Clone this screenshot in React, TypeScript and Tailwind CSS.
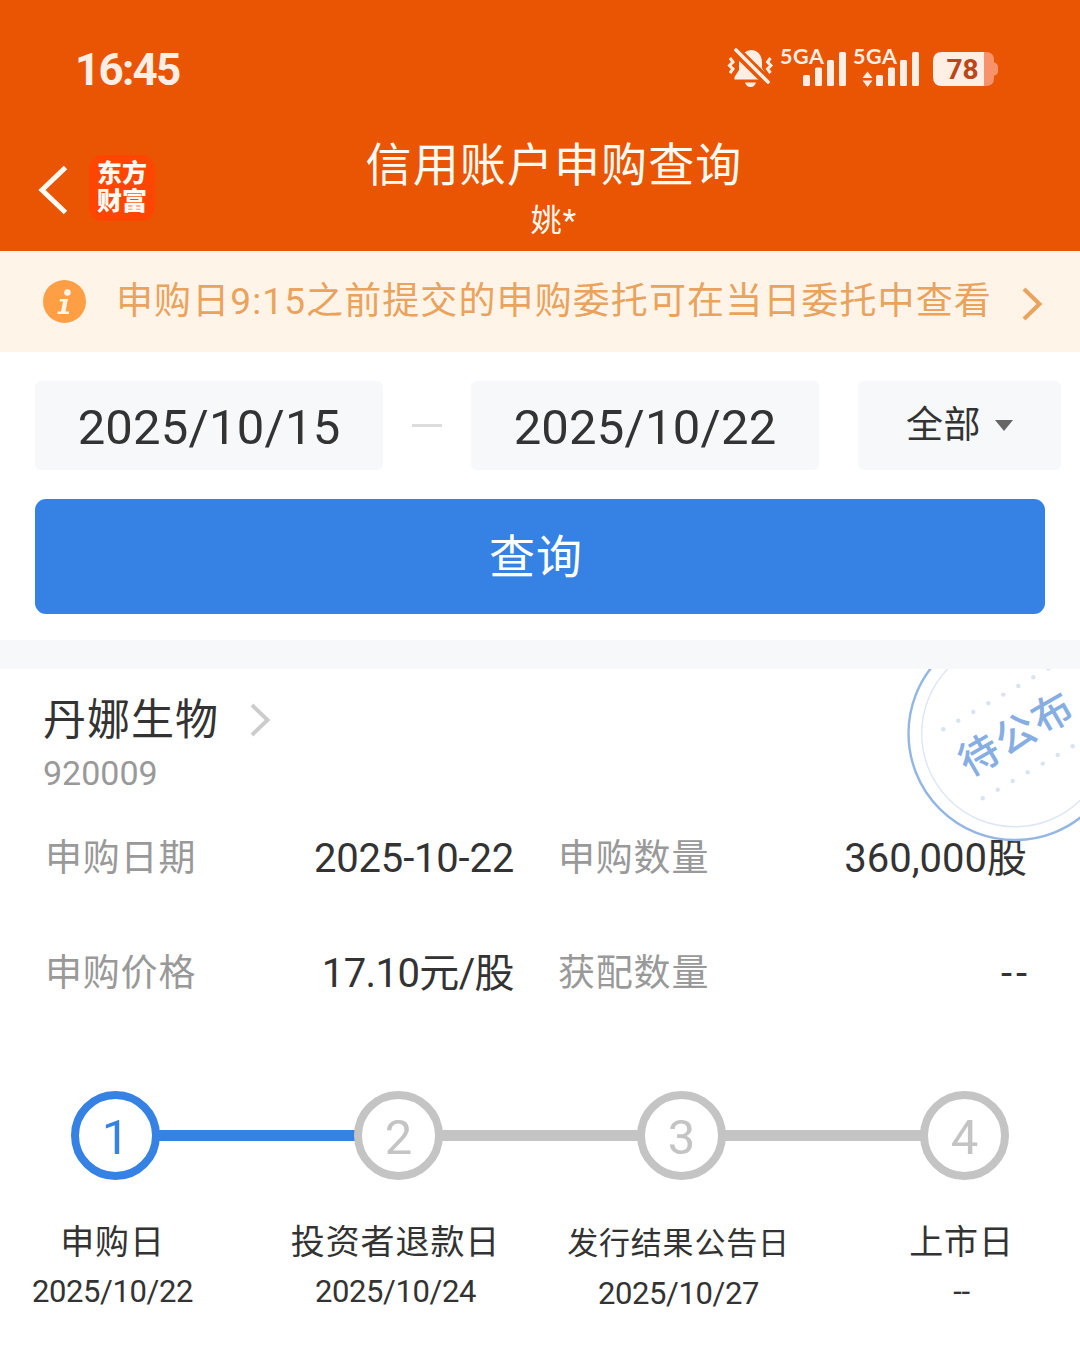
import { ReactNode } from 'react';

const dots = [0, 1, 2, 3, 4, 5, 6, 7];

const details = [
  { label: '申购日期', value: '2025-10-22', valueClass: 'tracking-[-0.2px]' },
  { label: '申购数量', value: '360,000股', valueClass: 'tracking-[0px]' },
  { label: '申购价格', value: '17.10元/股', valueClass: 'tracking-[-0.6px]' },
  { label: '获配数量', value: '--', valueClass: 'tracking-[4px] -mr-1' },
];

const steps = [
  { no: 1, name: '申购日', date: '2025/10/22', active: true },
  { no: 2, name: '投资者退款日', date: '2025/10/24' },
  { no: 3, name: '发行结果公告日', date: '2025/10/27', small: true },
  { no: 4, name: '上市日', date: '--' },
];

function StatusIcons() {
  return (
    <svg width="276" height="48" viewBox="724 44 276 48" fill="#ffeee4">
      {/* muted bell */}
      <path d="M739 63C739 57 744 50.500 751 50C758 50 762 56 762 62V68L767 76V79.500H734.500V77L739 70Z" />
      <path d="M745 82.500H756Q754.500 87 750.500 87Q746.500 87 745 82.500Z" />
      <path d="M731 46L774 88" stroke="#ea5504" strokeWidth="10" />
      <path d="M736 50L768 82" stroke="#ffeee4" strokeWidth="3.600" strokeLinecap="round" />
      <path
        d="M730 58L733 62L729.500 65.500L733 69L730 73M770.500 58L767.500 62L771 65.500L767.500 69L770.500 73"
        fill="none"
        stroke="#ffeee4"
        strokeWidth="3"
      />
      {/* first sim */}
      <text x="780" y="63.500" fontSize="21.500" fontWeight="700" textLength="44" className="font-['Lato',sans-serif]">5GA</text>
      <rect x="803" y="75" width="7" height="11" rx="1.500" />
      <rect x="815" y="67.500" width="7" height="18.500" rx="1.500" />
      <rect x="827" y="60" width="7" height="26" rx="1.500" />
      <rect x="839" y="52" width="7" height="34" rx="1.500" />
      {/* second sim */}
      <text x="853" y="63.500" fontSize="21.500" fontWeight="700" textLength="44" className="font-['Lato',sans-serif]">5GA</text>
      <path d="M867.500 71.500L872.500 78H862.500ZM867.500 87L872.500 80.500H862.500Z" />
      <rect x="876" y="75" width="7" height="11" rx="1.500" />
      <rect x="888" y="67.500" width="7" height="18.500" rx="1.500" />
      <rect x="900" y="60" width="7" height="26" rx="1.500" />
      <rect x="912" y="52" width="7" height="34" rx="1.500" />
      {/* battery */}
      <path d="M984 52H986Q994 52 994 60V62.500Q998 63 998 67V71Q998 75 994 75.500V78Q994 86 986 86H984Z" fill="#f7926a" />
      <path d="M984 52H942Q933 52 933 61V77Q933 86 942 86H984Z" />
      <text x="946.500" y="79" fontSize="28" fontWeight="700" textLength="32" fill="#b9471a" className="font-['Roboto',sans-serif]">78</text>
    </svg>
  );
}

function Stamp() {
  return (
    <svg className="absolute top-0 right-0" width="180" height="180" viewBox="900 669 180 180">
      <circle cx="1015" cy="733.500" r="106.500" fill="none" stroke="#93b6e4" strokeWidth="2.400" />
      <circle cx="1015" cy="733.500" r="93.300" fill="none" stroke="#dce6f5" strokeWidth="1.400" />
      {dots.map((i) => (
        <circle key={i} cx={943.3 + i * 15} cy={729.3 - i * 8.67} r="2.200" fill="#d8e3f3" />
      ))}
      {dots.map((i) => (
        <circle key={i} cx={982.7 + i * 15} cy={798.3 - i * 8.67} r="2.200" fill="#d8e3f3" />
      ))}
      <text
        x="1016"
        y="748"
        transform="rotate(-30 1016 733)"
        textAnchor="middle"
        fontSize="40"
        fontWeight="500"
        letterSpacing="2"
        fill="#86aee2"
      >
        待公布
      </text>
    </svg>
  );
}

function DateBox({ children }: { children: ReactNode }) {
  return (
    <div className="flex h-[89px] w-[348px] items-center justify-center rounded-md bg-[#f7f8fa] pt-1 text-[49px] tracking-[0.2px]">
      {children}
    </div>
  );
}

export default function App() {
  return (
    <div className="h-[1353px] w-[1080px] overflow-hidden bg-white font-['Roboto','Noto_Sans_CJK_SC',sans-serif] leading-none text-[#333]">
      <header className="h-[251px] bg-[#ea5504] text-[#fffaf2]">
        <div className="flex h-[136px] items-center justify-between pr-20 pl-[75px]">
          <span className="pt-1 text-[44px] font-bold tracking-[-1.800px] text-[#ffeee4]">16:45</span>
          <StatusIcons />
        </div>
        <div className="flex h-[115px]">
          <div className="flex flex-1 gap-[21px] pt-[19px] pl-[38px]">
            <svg className="mt-2.5" width="30" height="50" viewBox="0 0 30 50" fill="none" stroke="currentColor" strokeWidth="5">
              <path d="M27.500 2.500L4 25L27.500 47.500" />
            </svg>
            <div className="flex h-[66px] w-[66px] flex-col items-center justify-center rounded-[14px] bg-[#ff4502] text-[25px] leading-[28px] font-black">
              <span>东方</span>
              <span>财富</span>
            </div>
          </div>
          <div className="flex flex-col items-center">
            <h1 className="mt-1.5 text-[46px] leading-[46px] tracking-[1.100px]">信用账户申购查询</h1>
            <p className="mt-[17px] text-[31px] leading-[31px] tracking-[1px]">姚*</p>
          </div>
          <div className="flex-1 pr-[10px]" />
        </div>
      </header>

      <div className="flex h-[101px] items-center bg-[#fff4e7] pl-[43px] text-[#e9a35d]">
        <svg width="43" height="43" viewBox="0 0 43 43">
          <circle cx="21.500" cy="21.500" r="21.500" fill="#ff9f45" />
          <circle cx="24.500" cy="12.500" r="3.300" fill="#fff4e7" />
          <path d="M17 19H25L22.500 31.500H26V34H14.500V31.500H18L20 21.500H16.500Z" fill="#fff4e7" />
        </svg>
        <p className="ml-[30px] w-[876px] text-[37px] tracking-[1.100px] whitespace-nowrap">
          申购日9:15之前提交的申购委托可在当日委托中查看
        </p>
        <svg className="ml-[29px] mt-1" width="22" height="34" viewBox="0 0 22 34" fill="none" stroke="currentColor" strokeWidth="4">
          <path d="M3 2L18.500 17L3 32" />
        </svg>
      </div>

      <section className="h-[288px] px-[35px] pt-[29px]">
        <div className="-mr-4 flex items-center justify-between">
          <DateBox>2025/10/15</DateBox>
          <div className="h-[3px] w-[30px] bg-[#dcdcdc]" />
          <DateBox>2025/10/22</DateBox>
          <button className="ml-[10px] flex h-[89px] w-[203px] items-center justify-center gap-[14px] rounded-md bg-[#f7f8fa] text-[37px] tracking-[0.500px]">
            全部
            <svg width="18" height="11" viewBox="0 0 18 11" fill="#666">
              <path d="M0 0H18L9 11Z" />
            </svg>
          </button>
        </div>
        <button className="mt-[29px] h-[115px] w-full rounded-[11px] bg-[#3582e4] pr-2 text-[46px] tracking-[1px] text-white">
          查询
        </button>
      </section>

      <div className="h-[29px] bg-[#f7f8fa]" />

      <section className="relative h-[684px] overflow-hidden">
        <Stamp />
        <div className="flex items-center gap-[30px] pt-[29px] pl-[43px]">
          <h2 className="text-[43px] leading-[44px] tracking-[1px]">丹娜生物</h2>
          <svg width="22" height="34" viewBox="0 0 22 34" fill="none" stroke="#ccc" strokeWidth="4">
            <path d="M3 2L18.500 17L3 32" />
          </svg>
        </div>
        <p className="mt-[14px] pl-[43px] text-[34px] leading-[34px] text-[#999]">920009</p>

        <dl className="mt-[48px] grid grid-cols-[469px_469px] gap-x-[44px] pl-[45px]">
          {details.map((item) => (
            <div key={item.label} className="flex h-[115px] items-start justify-between pt-0.5 text-[37px] leading-[37px]">
              <dt className="tracking-[0.800px] text-[#999]">{item.label}</dt>
              <dd className={`text-[40px] ${item.valueClass}`}>{item.value}</dd>
            </div>
          ))}
        </dl>

        <div className="mt-[23px] flex items-center px-[71px]">
          {steps.map((step, i) => (
            <div key={step.no} className={i === 0 ? 'flex items-center' : 'flex flex-1 items-center'}>
              {i > 0 && <div className={`-mx-0.5 h-[11px] flex-1 ${i === 1 ? 'bg-[#3582e4]' : 'bg-[#c4c4c4]'}`} />}
              <div
                className={`flex h-[89px] w-[89px] items-center justify-center rounded-full border-8 pt-1 text-[49px] ${
                  step.active ? 'border-[#3582e4] text-[#3582e4]' : 'border-[#c4c4c4] text-[#c4c4c4]'
                }`}
              >
                {step.no}
              </div>
            </div>
          ))}
        </div>
        <div className="mt-[44px] -mr-2 -ml-[29px] grid grid-cols-[283px_283px_283px_283px] text-center">
          {steps.map((step) => (
            <div key={step.no}>
              <p
                className={
                  step.small
                    ? 'mt-0.5 text-[31px] leading-[36px] tracking-[0.800px]'
                    : 'text-[34px] leading-[36px] tracking-[0.900px]'
                }
              >
                {step.name}
              </p>
              <p className="mt-[15px] text-[31px] leading-[34px] tracking-[-0.400px]">{step.date}</p>
            </div>
          ))}
        </div>
      </section>
    </div>
  );
}
